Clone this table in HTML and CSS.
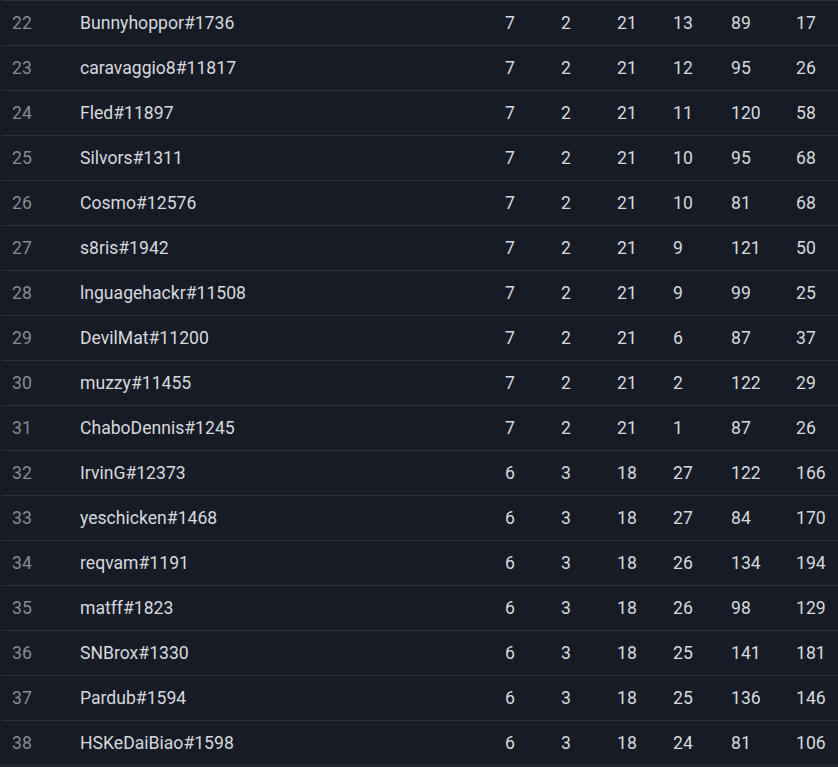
FILE: index.html
```html
<html lang="en">
<head>
    <meta charset="UTF-8">
    <meta name="viewport" content="width=device-width, initial-scale=1.0">
    <title>Standings</title>
    <link rel="stylesheet" href="styles.css">
</head>
<body>
    <div class="board">
        <div class="row"><span class="rank">22</span><span class="name">Bunnyhoppor#1736</span><span>7</span><span>2</span><span>21</span><span>13</span><span>89</span><span>17</span></div>
        <div class="row"><span class="rank">23</span><span class="name">caravaggio8#11817</span><span>7</span><span>2</span><span>21</span><span>12</span><span>95</span><span>26</span></div>
        <div class="row"><span class="rank">24</span><span class="name">Fled#11897</span><span>7</span><span>2</span><span>21</span><span>11</span><span>120</span><span>58</span></div>
        <div class="row"><span class="rank">25</span><span class="name">Silvors#1311</span><span>7</span><span>2</span><span>21</span><span>10</span><span>95</span><span>68</span></div>
        <div class="row"><span class="rank">26</span><span class="name">Cosmo#12576</span><span>7</span><span>2</span><span>21</span><span>10</span><span>81</span><span>68</span></div>
        <div class="row"><span class="rank">27</span><span class="name">s8ris#1942</span><span>7</span><span>2</span><span>21</span><span>9</span><span>121</span><span>50</span></div>
        <div class="row"><span class="rank">28</span><span class="name">lnguagehackr#11508</span><span>7</span><span>2</span><span>21</span><span>9</span><span>99</span><span>25</span></div>
        <div class="row"><span class="rank">29</span><span class="name">DevilMat#11200</span><span>7</span><span>2</span><span>21</span><span>6</span><span>87</span><span>37</span></div>
        <div class="row"><span class="rank">30</span><span class="name">muzzy#11455</span><span>7</span><span>2</span><span>21</span><span>2</span><span>122</span><span>29</span></div>
        <div class="row"><span class="rank">31</span><span class="name">ChaboDennis#1245</span><span>7</span><span>2</span><span>21</span><span>1</span><span>87</span><span>26</span></div>
        <div class="row"><span class="rank">32</span><span class="name">IrvinG#12373</span><span>6</span><span>3</span><span>18</span><span>27</span><span>122</span><span>166</span></div>
        <div class="row"><span class="rank">33</span><span class="name">yeschicken#1468</span><span>6</span><span>3</span><span>18</span><span>27</span><span>84</span><span>170</span></div>
        <div class="row"><span class="rank">34</span><span class="name">reqvam#1191</span><span>6</span><span>3</span><span>18</span><span>26</span><span>134</span><span>194</span></div>
        <div class="row"><span class="rank">35</span><span class="name">matff#1823</span><span>6</span><span>3</span><span>18</span><span>26</span><span>98</span><span>129</span></div>
        <div class="row"><span class="rank">36</span><span class="name">SNBrox#1330</span><span>6</span><span>3</span><span>18</span><span>25</span><span>141</span><span>181</span></div>
        <div class="row"><span class="rank">37</span><span class="name">Pardub#1594</span><span>6</span><span>3</span><span>18</span><span>25</span><span>136</span><span>146</span></div>
        <div class="row"><span class="rank">38</span><span class="name">HSKeDaiBiao#1598</span><span>6</span><span>3</span><span>18</span><span>24</span><span>81</span><span>106</span></div>
    </div>
</body>
</html>
```

FILE: styles.css
```css
body {
    margin: 0;
    padding: 0;
    background-color: #161b26;
    font-family: Roboto, "Liberation Sans", sans-serif;
    font-size: 17.6px;
    color: #d7d9dd;
}

.board {
    padding-left: 2px;
    border-bottom: 1px solid #2c313c;
}

.row {
    display: grid;
    grid-template-columns: 68px 425px 56px 56px 56px 58px 65px 1fr;
    align-items: center;
    height: 44px;
    border-top: 1px solid #2c313c;
}

.row span {
    padding-left: 10px;
    white-space: nowrap;
}

.row .rank {
    color: #878b94;
}
```
